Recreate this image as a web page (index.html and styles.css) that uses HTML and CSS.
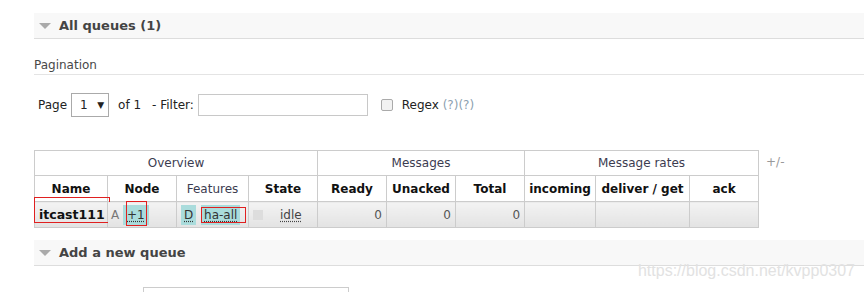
FILE: index.html
```html
<!DOCTYPE html>
<html lang="en">
<head>
    <meta charset="UTF-8">
    <title>Queues - RabbitMQ Management</title>
    <link rel="stylesheet" href="styles.css">
</head>
<body>
    <div class="page">
        <!-- All queues section -->
        <div class="section-head">
            <span class="toggle"></span>
            <h2>All queues (1)</h2>
        </div>

        <h3 class="pagination-title">Pagination</h3>
        <div class="pager">
            <span>Page</span>
            <span class="fake-select">1 <span class="arrow">&#9660;</span></span>
            <span class="of">of 1</span>
            <span>- Filter:</span>
            <span class="filter-input"></span>
            <span class="checkbox"></span>
            <span class="regex">Regex <span class="help">(?)(?)</span></span>
        </div>

        <div class="table-wrap">
            <table class="queues">
                <colgroup>
                    <col class="w-name">
                    <col class="w-node">
                    <col class="w-feat">
                    <col class="w-std">
                    <col class="w-std">
                    <col class="w-std">
                    <col class="w-std">
                    <col class="w-in">
                    <col class="w-deliver">
                    <col class="w-std">
                </colgroup>
                <thead>
                    <tr class="group-row">
                        <th colspan="4">Overview</th>
                        <th colspan="3">Messages</th>
                        <th colspan="3">Message rates</th>
                    </tr>
                    <tr class="col-row">
                        <th>Name</th>
                        <th>Node</th>
                        <th class="plain">Features</th>
                        <th>State</th>
                        <th>Ready</th>
                        <th>Unacked</th>
                        <th>Total</th>
                        <th>incoming</th>
                        <th>deliver / get</th>
                        <th>ack</th>
                    </tr>
                </thead>
                <tbody>
                    <tr class="data-row">
                        <td class="name-cell">itcast111<span class="mark mark-name"></span></td>
                        <td class="node-cell">A <span class="badge dotted">+1</span><span class="mark mark-node"></span></td>
                        <td class="feat-cell"><span class="badge dotted">D</span> <span class="badge dotted ha">ha-all</span><span class="mark mark-ha"></span></td>
                        <td class="state-cell"><span class="state-box"></span><span class="dotted">idle</span></td>
                        <td class="num">0</td>
                        <td class="num">0</td>
                        <td class="num">0</td>
                        <td></td>
                        <td></td>
                        <td></td>
                    </tr>
                </tbody>
            </table>
            <span class="plus-minus">+/-</span>
        </div>

        <!-- Add a new queue section -->
        <div class="section-head add-head">
            <span class="toggle"></span>
            <h2>Add a new queue</h2>
        </div>
        <div class="new-queue-input"></div>

        <div class="watermark">https://blog.csdn.net/kvpp0307</div>
    </div>
</body>
</html>
```

FILE: styles.css
```css
/* General */
body {
    margin: 0;
    padding: 0;
    font-family: "DejaVu Sans", Verdana, sans-serif;
    font-size: 12px;
    color: #484848;
    background-color: #fff;
    overflow: hidden;
}

.page {
    position: relative;
    height: 292px;
    padding: 13px 0 0 34px;
    box-sizing: border-box;
    overflow: hidden;
}

/* Section headers */
.section-head {
    display: flex;
    align-items: center;
    height: 25px;
    background-color: #f8f8f8;
    border-bottom: 1px solid #ddd;
    padding-left: 5px;
}

.section-head h2 {
    margin: 0;
    font-size: 13px;
    font-weight: bold;
    color: #444;
}

.toggle {
    width: 0;
    height: 0;
    border-left: 6px solid transparent;
    border-right: 6px solid transparent;
    border-top: 6px solid #aaa;
    margin-right: 8px;
}

.add-head {
    margin-top: 12px;
}

/* Pagination */
.pagination-title {
    margin: 19px 0 0;
    font-size: 12px;
    font-weight: normal;
    line-height: 15px;
    padding-bottom: 1px;
    border-bottom: 1px solid #e4e4e4;
}

.pager {
    display: flex;
    align-items: center;
    height: 24px;
    margin-top: 17px;
    padding-left: 4px;
    padding-top: 1px;
    color: #222;
}

.fake-select {
    display: inline-flex;
    align-items: center;
    justify-content: space-between;
    box-sizing: border-box;
    width: 38px;
    height: 24px;
    margin-left: 4px;
    padding: 0 4px 0 8px;
    border: 1px solid #aaa;
    background-color: #fff;
}

.fake-select .arrow {
    font-size: 9px;
}

.of {
    margin-left: 9px;
    margin-right: 11px;
}

.filter-input {
    box-sizing: border-box;
    width: 170px;
    height: 22px;
    margin-left: 4px;
    border: 1px solid #c8c8c8;
    background-color: #fff;
}

.checkbox {
    box-sizing: border-box;
    width: 12px;
    height: 12px;
    margin-left: 13px;
    border: 1px solid #aaa;
    border-radius: 2px;
    background-color: #f2f2f2;
}

.regex {
    margin-left: 9px;
}

.help {
    color: #8c9fb0;
}

/* Queues table */
.table-wrap {
    display: flex;
    align-items: flex-start;
    margin-top: 33px;
}

.queues {
    border-collapse: collapse;
    table-layout: fixed;
    width: 725px;
    border: 1px solid #ccc;
}

.w-name { width: 73px; }
.w-node { width: 69px; }
.w-feat { width: 72px; }
.w-std { width: 69px; }
.w-in { width: 71px; }
.w-deliver { width: 94px; }

.queues th,
.queues td {
    border: 1px solid #ccc;
    padding: 0 4px;
    white-space: nowrap;
}

.group-row th {
    height: 24px;
    font-weight: normal;
    color: #3c3c50;
}

.col-row th {
    height: 25px;
    font-weight: bold;
    color: #111;
}

.col-row th.plain {
    font-weight: normal;
    color: #3c3c50;
}

.data-row td {
    height: 25px;
    background: linear-gradient(#f3f3f3, #e3e3e3);
    position: relative;
}

.name-cell {
    font-weight: bold;
    font-size: 12.5px;
    color: #111;
}

.node-cell {
    color: #777;
    padding-left: 3px !important;
}

.badge {
    display: inline-block;
    padding: 2px 3px;
    background-color: #aadcdc;
    color: #333;
    line-height: 16px;
}

.node-cell .badge {
    padding: 2px 4px;
}

.dotted {
    text-decoration: underline dotted;
    text-underline-offset: 2px;
}

.feat-cell .ha {
    margin-left: 1px;
}

.state-cell {
    color: #444;
    padding-left: 4px !important;
}

.state-box {
    display: inline-block;
    width: 10px;
    height: 10px;
    background-color: #ddd;
    margin-right: 17px;
    vertical-align: middle;
}

.num {
    text-align: right;
    color: #555;
}

/* Red annotation boxes */
.mark {
    position: absolute;
    border: 1px solid #e02020;
    pointer-events: none;
}

.mark-name {
    left: -1px;
    top: -5px;
    width: 74px;
    height: 24px;
}

.mark-node {
    left: 18px;
    top: -1px;
    width: 19px;
    height: 23px;
}

.mark-ha {
    left: 24px;
    top: 5px;
    width: 43px;
    height: 14px;
}

.plus-minus {
    margin-left: 7px;
    margin-top: 5px;
    color: #999;
}

/* Add queue form */
.new-queue-input {
    width: 206px;
    height: 20px;
    margin: 21px 0 0 109px;
    border: 1px solid #ccc;
    box-sizing: border-box;
}

.watermark {
    position: absolute;
    right: 9px;
    top: 262px;
    font-family: "Liberation Sans", Arial, sans-serif;
    font-size: 16px;
    color: #e2e2e2;
}
```
